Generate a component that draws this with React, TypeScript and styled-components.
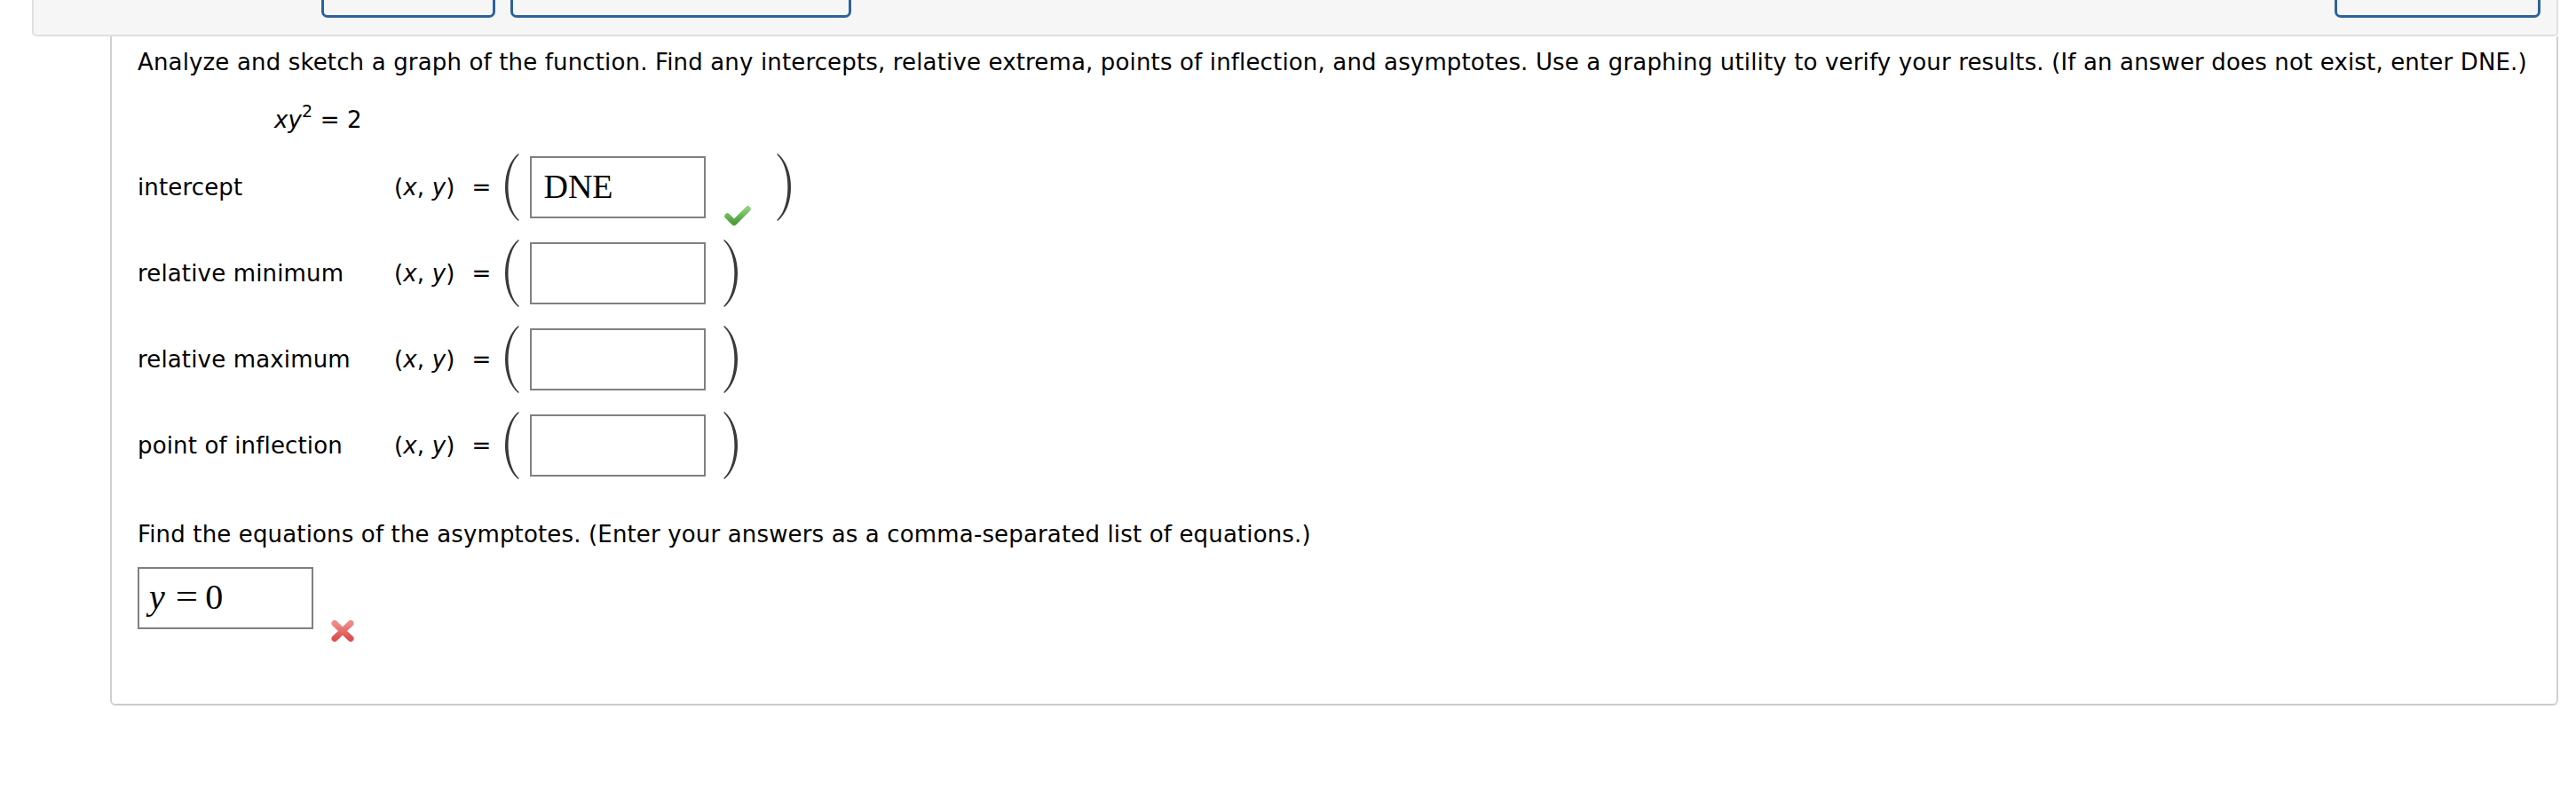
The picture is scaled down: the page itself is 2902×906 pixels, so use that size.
import React from "react";
import styled, { createGlobalStyle } from "styled-components";

const Global = createGlobalStyle`
  html, body { margin: 0; padding: 0; background: #ffffff; }
  body { font-family: "DejaVu Sans", Verdana, sans-serif; color: #000; }
`;

const Page = styled.div`
  width: 2902px;
  min-height: 906px;
`;

const TopBar = styled.div`
  box-sizing: border-box;
  height: 41px;
  margin: 0 20px 0 36px;
  background: #f6f6f6;
  border: 2px solid #e0e0e0;
  border-top: none;
  border-radius: 0 0 5px 5px;
  display: flex;
  align-items: flex-start;
  padding: 0 18px 0 324px;
`;

const NavButton = styled.div<{ $w: number; $ml?: string }>`
  box-sizing: border-box;
  flex-shrink: 0;
  width: ${(p) => p.$w}px;
  height: 20px;
  border: 3px solid #2e6399;
  border-top: none;
  border-radius: 0 0 7px 7px;
  background: #f6f6f6;
  margin-left: ${(p) => p.$ml ?? "0"};
`;

const Panel = styled.div`
  box-sizing: border-box;
  margin: 0 20px 0 124px;
  border: 2px solid #d0d0d0;
  border-top: none;
  border-bottom-color: #cbcbcb;
  border-radius: 0 0 6px 6px;
  padding: 13px 29px 84px;
  font-size: 26px;
  letter-spacing: 0.15px;
`;

const Para = styled.p<{ $mt?: number }>`
  margin: ${(p) => p.$mt ?? 0}px 0 0;
  line-height: 32px;
  white-space: nowrap;
`;

const Equation = styled.div`
  margin-top: 33px;
  padding-left: 154px;
  line-height: 32px;
`;

const Var = styled.i`
  font-style: italic;
`;

const Sup = styled.span`
  font-size: 19px;
  line-height: 0;
  vertical-align: 12px;
`;

const Rows = styled.div`
  margin-top: 21px;
  display: flex;
  flex-direction: column;
  gap: 19px;
`;

const Row = styled.div`
  display: flex;
  align-items: center;
  height: 78px;
`;

const Label = styled.span`
  width: 289px;
  flex-shrink: 0;
  white-space: nowrap;
`;

const Coord = styled.span`
  white-space: nowrap;
`;

const Equals = styled.span`
  margin-left: 19px;
`;

const ParenSvg = styled.svg<{ $ml: number }>`
  flex-shrink: 0;
  margin-left: ${(p) => p.$ml}px;
  overflow: visible;
`;

const AnswerBox = styled.div<{ $ml?: number }>`
  box-sizing: border-box;
  flex-shrink: 0;
  width: 198px;
  height: 70px;
  margin-left: ${(p) => p.$ml ?? 0}px;
  border: 2px solid #808080;
  background: #fff;
  display: flex;
  align-items: center;
  padding: 0 0 3px 13px;
  font-family: "Liberation Serif", "Times New Roman", serif;
  font-size: 38px;
  line-height: 38px;
  letter-spacing: 0;
  color: #000;
`;

const MathText = styled.span`
  font-family: "Liberation Serif", "Times New Roman", serif;
  font-size: 40px;
  display: inline-flex;
  align-items: baseline;
  margin-left: -2px;
`;

const MathOp = styled.span`
  display: inline-block;
  margin: 0 10px 0 13px;
  transform: scaleX(1.12);
`;

const Indicator = styled.span<{ $ml: number; $mb: number }>`
  display: inline-flex;
  flex-shrink: 0;
  align-self: flex-end;
  margin-left: ${(p) => p.$ml}px;
  margin-bottom: -${(p) => p.$mb}px;
`;

const AnswerRow = styled.div`
  margin-top: 21px;
  display: flex;
  align-items: flex-end;
  height: 70px;
`;

const Paren = ({ side, ml }: { side: "left" | "right"; ml: number }) => (
  <ParenSvg $ml={ml} width="18" height="78" viewBox="0 0 18 78">
    <path
      d="M16 1 C -4 17, -4 61, 16 77 L 16.8 76 C 0.5 61, 0.5 17, 16.8 2 Z"
      fill="#3a3a3a"
      transform={side === "right" ? "translate(18 0) scale(-1 1)" : undefined}
    />
  </ParenSvg>
);

const CheckIcon = () => (
  <svg width="30" height="24" viewBox="0 0 30 24">
    <defs>
      <linearGradient id="chk" x1="0" y1="0" x2="0" y2="1">
        <stop offset="0" stopColor="#8ccf78" />
        <stop offset="1" stopColor="#4c9c3d" />
      </linearGradient>
    </defs>
    <path
      d="M3.5 12.5 L11 20 L26.5 4.5"
      fill="none"
      stroke="url(#chk)"
      strokeWidth="6.5"
      strokeLinecap="round"
      strokeLinejoin="round"
    />
  </svg>
);

const CrossIcon = () => (
  <svg width="28" height="26" viewBox="0 0 28 26">
    <defs>
      <linearGradient id="crs" x1="0" y1="0" x2="0" y2="1">
        <stop offset="0" stopColor="#f08a8a" />
        <stop offset="1" stopColor="#dc4f4f" />
      </linearGradient>
    </defs>
    <path
      d="M5 4.5 L23 21.5 M23 4.5 L5 21.5"
      fill="none"
      stroke="url(#crs)"
      strokeWidth="7"
      strokeLinecap="round"
    />
  </svg>
);

type RowData = { label: string; value?: string; correct?: boolean };

const rows: RowData[] = [
  { label: "intercept", value: "DNE", correct: true },
  { label: "relative minimum" },
  { label: "relative maximum" },
  { label: "point of inflection" },
];

export default function App() {
  return (
    <Page>
      <Global />
      <TopBar>
        <NavButton $w={196} />
        <NavButton $w={384} $ml="17px" />
        <NavButton $w={232} $ml="auto" />
      </TopBar>
      <Panel>
        <Para>
          Analyze and sketch a graph of the function. Find any intercepts, relative extrema, points of
          inflection, and asymptotes. Use a graphing utility to verify your results. (If an answer does
          not exist, enter DNE.)
        </Para>
        <Equation>
          <Var>xy</Var>
          <Sup>2</Sup> = 2
        </Equation>
        <Rows>
          {rows.map((r) => (
            <Row key={r.label}>
              <Label>{r.label}</Label>
              <Coord>
                (<Var>x</Var>, <Var>y</Var>)
              </Coord>
              <Equals>=</Equals>
              <Paren side="left" ml={15} />
              <AnswerBox $ml={11}>{r.value ?? ""}</AnswerBox>
              {r.correct ? (
                <>
                  <Indicator $ml={21} $mb={5}>
                    <CheckIcon />
                  </Indicator>
                  <Paren side="right" ml={28} />
                </>
              ) : (
                <Paren side="right" ml={19} />
              )}
            </Row>
          ))}
        </Rows>
        <Para $mt={45}>
          Find the equations of the asymptotes. (Enter your answers as a comma-separated list of
          equations.)
        </Para>
        <AnswerRow>
          <AnswerBox>
            <MathText>
              <Var>y</Var>
              <MathOp>=</MathOp>0
            </MathText>
          </AnswerBox>
          <Indicator $ml={19} $mb={15}>
            <CrossIcon />
          </Indicator>
        </AnswerRow>
      </Panel>
    </Page>
  );
}
